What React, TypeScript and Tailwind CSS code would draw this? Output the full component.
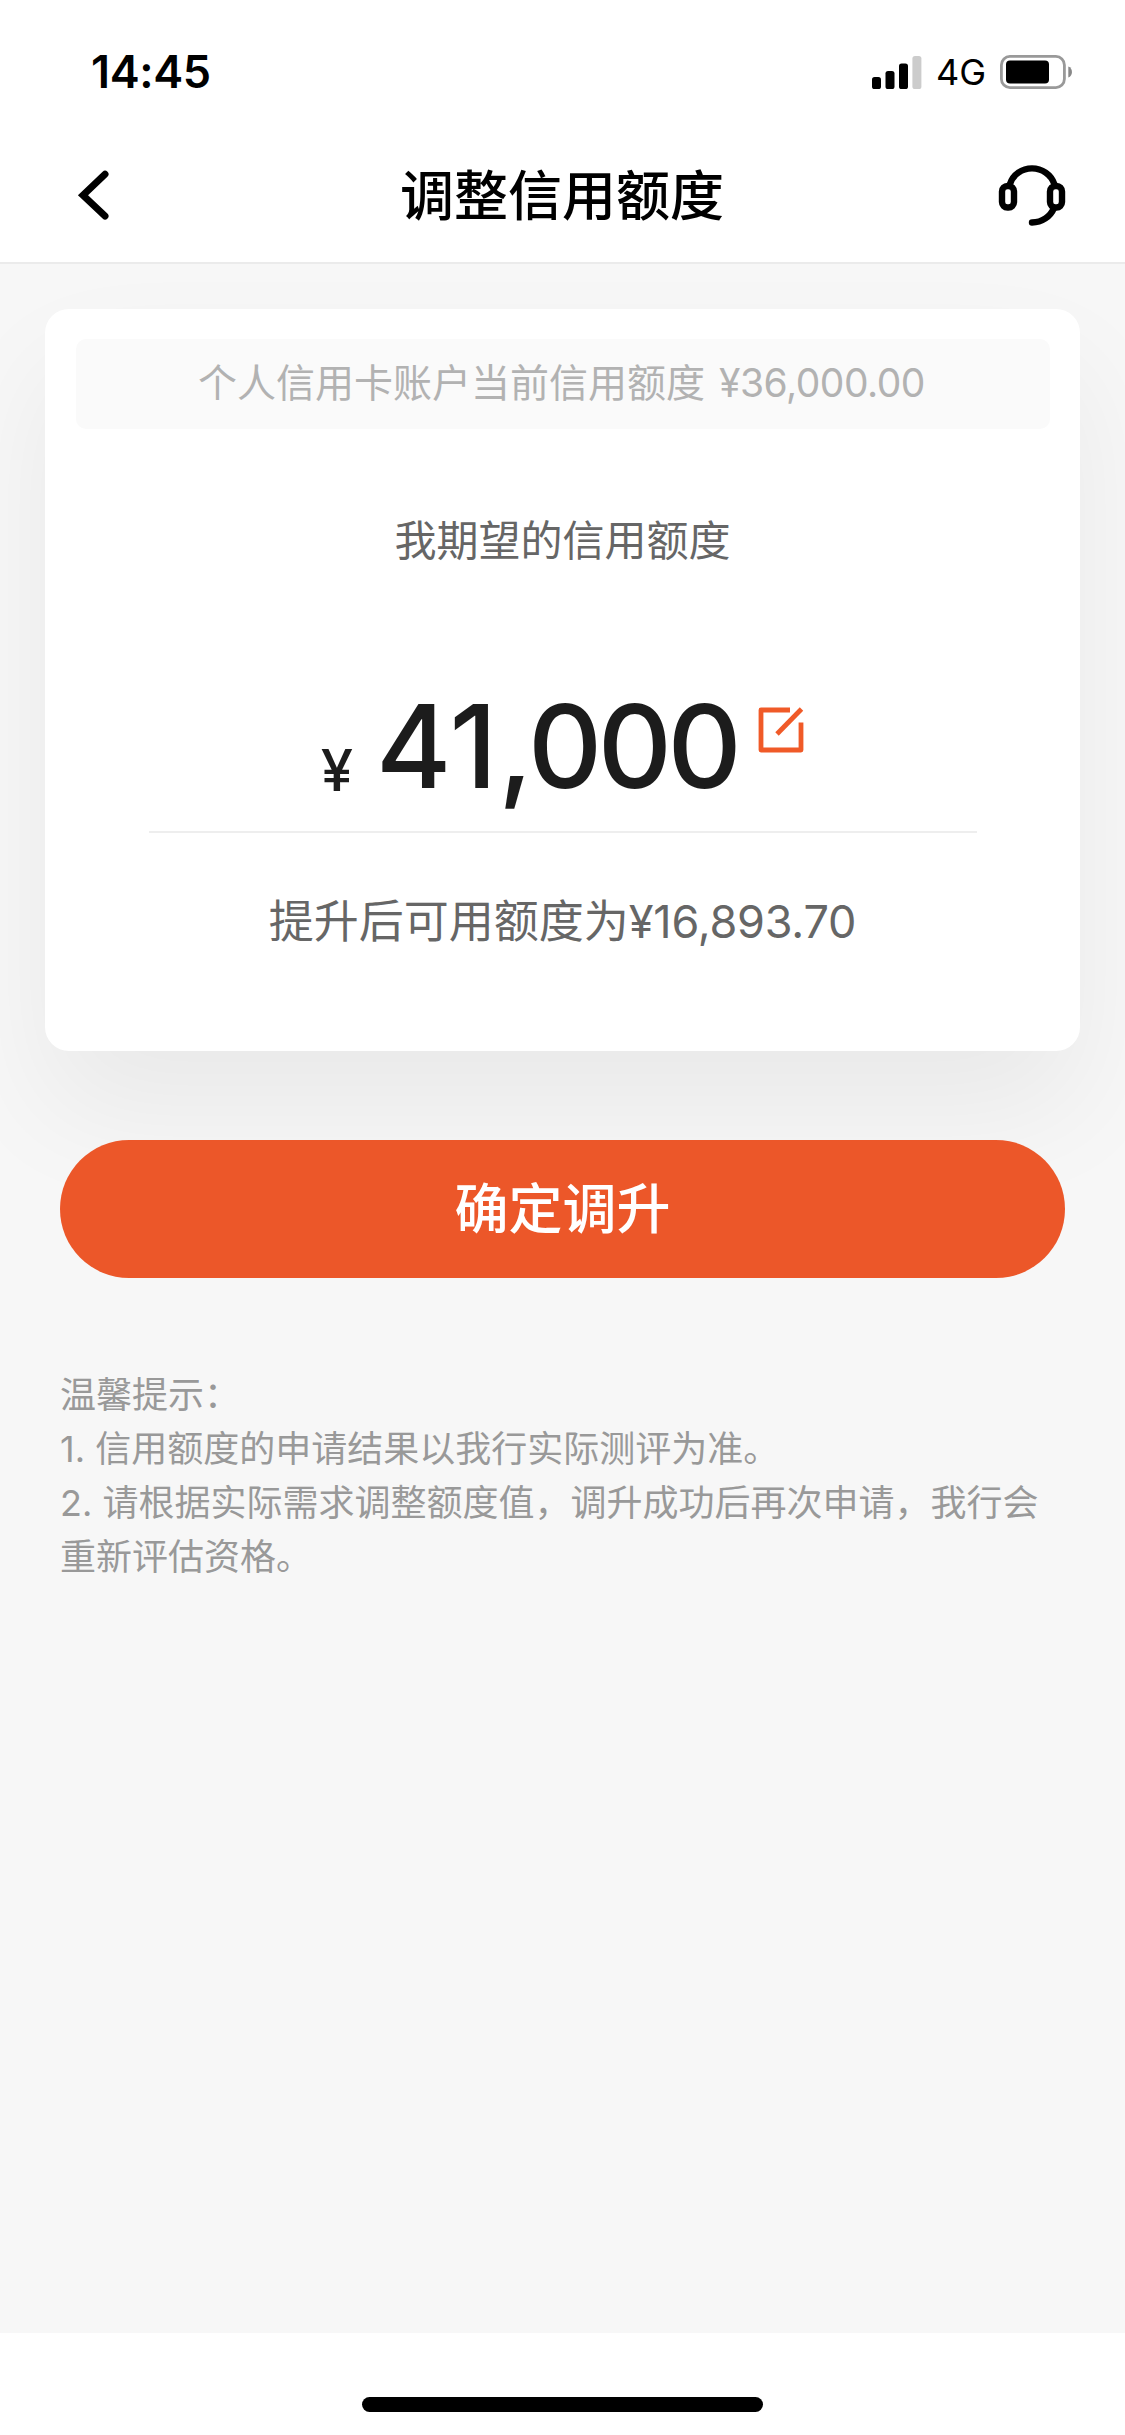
function StatusBar() {
  return (
    <div className="flex h-[130px] items-start justify-between pl-[91px] pr-[52px] pt-[45px]">
      <span className="text-[45px] leading-[54px] font-semibold tracking-[-0.4px]">
        14:45
      </span>
      <div className="flex items-center pt-[9px]">
        <svg width="50" height="34" viewBox="0 0 50 34" fill="#000">
          <rect x="0" y="22" width="9" height="12" rx="2.6" />
          <rect x="13.5" y="16" width="9" height="18" rx="2.6" />
          <rect x="27" y="8.5" width="9" height="25.5" rx="2.6" />
          <rect x="40.4" y="1" width="9" height="33" rx="2.6" fill="#ccc" />
        </svg>
        <span className="ml-[14px] w-[50px] text-[36px] leading-[34px] pt-px whitespace-nowrap">
          4G
        </span>
        <svg
          className="ml-[14px]"
          width="73"
          height="34"
          viewBox="0 0 73 34"
          fill="none"
        >
          <rect
            x="1.4"
            y="1.4"
            width="63"
            height="31.2"
            rx="8.5"
            stroke="#999"
            strokeWidth="2.8"
          />
          <rect x="6" y="5.6" width="43" height="22.8" rx="4" fill="#000" />
          <path d="M68.3 11.6 C73.2 13.2 73.2 21 68.3 22.6 Z" fill="#888" />
        </svg>
      </div>
    </div>
  );
}

function NavBar() {
  return (
    <div className="flex h-[134px] items-center justify-between border-b-[2px] border-[#ebebeb] pl-[76px] pr-[57px]">
      <button aria-label="返回" className="w-[50px] pb-[2px]">
        <svg width="36" height="56" viewBox="0 0 36 56" fill="none">
          <path
            d="M29 7.2 L7 28.2 L29 49"
            stroke="#000"
            strokeWidth="7"
            strokeLinecap="round"
            strokeLinejoin="miter"
          />
        </svg>
      </button>
      <h1 className="pt-px text-[54px] leading-[72px] font-medium">
        调整信用额度
      </h1>
      <button aria-label="客服" className="w-[70px] pb-[3px]">
        <svg
          width="70"
          height="64"
          viewBox="0 0 70 64"
          fill="none"
          stroke="#000"
          strokeWidth="6.4"
        >
          <path d="M12 21 C15 11.5 24 5.4 34 5.4 C44 5.4 53 11.5 56.3 21" />
          <rect x="4" y="23" width="12" height="21.5" rx="5.5" />
          <rect x="52" y="23" width="12" height="21.5" rx="5.5" />
          <path
            d="M56 45 C52.5 53.5 44 59.5 34 59.5"
            strokeLinecap="round"
          />
        </svg>
      </button>
    </div>
  );
}

function EditIcon() {
  return (
    <svg
      width="46"
      height="46"
      viewBox="0 0 46 46"
      fill="none"
      stroke="#f05a28"
      strokeWidth="4.8"
      strokeLinejoin="round"
    >
      <path d="M32 3 H3 V43 H43 V15.5" />
      <path d="M19 27 L43.5 2" />
    </svg>
  );
}

function LimitCard() {
  return (
    <section className="mx-[45px] mt-[45px] flex h-[742px] flex-col items-center rounded-[24px] bg-white pt-[30px] shadow-[0_60px_120px_rgba(0,0,0,0.06)]">
      <div className="flex h-[90px] w-[974px] items-center justify-center rounded-[10px] bg-[#fafafa] pr-[2px] pb-[3px] text-[39px] leading-[54px] whitespace-pre text-[#b2b2b2]">
        个人信用卡账户当前信用额度{" "}
        <span className="ml-[3px] tracking-[-0.5px]">¥36,000.00</span>
      </div>

      <p className="mt-[82px] text-[42px] leading-[60px] text-[#666]">
        我期望的信用额度
      </p>

      {/* Requested amount */}
      <div className="mt-[106px] flex h-[156px] w-[828px] items-baseline justify-center border-b-[2px] border-[#eee] text-[#1c1c1c]">
        <span className="relative top-[3px] text-[58px] leading-[140px] font-medium">
          ¥
        </span>
        <span className="ml-[23px] text-[115px] leading-[140px] font-medium">
          <span className="tracking-[1px]">41</span>
          <span className="tracking-[-5px]">,</span>
          <span className="tracking-[-4.5px]">000</span>
        </span>
        <button aria-label="修改额度" className="ml-[21px] mt-[30px] self-start">
          <EditIcon />
        </button>
      </div>

      <p className="mt-[57px] text-[45px] leading-[64px] whitespace-nowrap text-[#666]">
        提升后可用额度为<span className="tracking-[-0.2px]">¥16,893.70</span>
      </p>
    </section>
  );
}

export default function App() {
  return (
    <div className="flex h-[2435px] w-[1125px] flex-col bg-[#f7f7f7] font-['Inter','Noto_Sans_CJK_SC',sans-serif] text-black">
      <header className="relative z-10 bg-white">
        <StatusBar />
        <NavBar />
      </header>

      <main className="flex-1">
        <LimitCard />

        <button className="relative mx-[60px] mt-[89px] flex h-[138px] w-[1005px] items-center justify-center rounded-full bg-[#ec5729] pt-px text-[54px] leading-[72px] font-medium text-white">
          确定调升
        </button>

        <div className="mx-[60px] mt-[90px] text-[36px] leading-[54px] text-[#999]">
          <p>温馨提示：</p>
          <p>1. 信用额度的申请结果以我行实际测评为准。</p>
          <p>2. 请根据实际需求调整额度值，调升成功后再次申请，我行会重新评估资格。</p>
        </div>
      </main>

      {/* Home indicator */}
      <footer className="flex h-[102px] justify-center bg-white pt-[64px]">
        <div className="h-[15px] w-[401px] rounded-full bg-black" />
      </footer>
    </div>
  );
}
